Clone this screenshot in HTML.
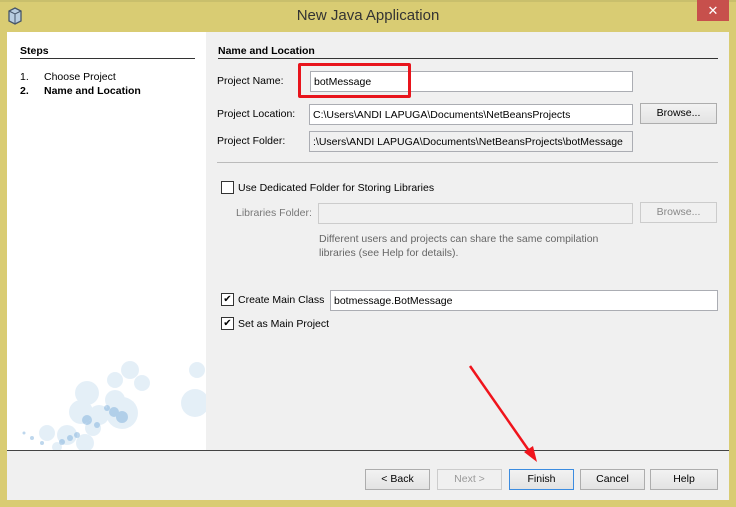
<!DOCTYPE html><html><head><style>
*{margin:0;padding:0;box-sizing:border-box}
body{width:736px;height:507px;background:#d9cc73;position:relative;overflow:hidden;font-family:"Liberation Sans",sans-serif;font-size:10.5px;color:#000}
.a{position:absolute;white-space:nowrap}
.in{position:absolute;background:#fff;border:1px solid #abadb3;height:21px;padding:4px 3px;white-space:nowrap;overflow:hidden}
.btn{position:absolute;border:1px solid #adadad;background:linear-gradient(#f2f2f2,#e3e3e3);height:21px;text-align:center;line-height:19px}
.cb{position:absolute;width:13px;height:13px;border:1px solid #333;background:#fff;font-size:10px;line-height:11px;text-align:center}
</style></head><body>
<div class="a" style="left:0;top:0;width:736px;height:2px;background:#c9bf6c"></div>
<svg class="a" style="left:8px;top:7px" width="14" height="18" viewBox="0 0 14 18"><path d="M7 1L13 4V14L7 17L1 14V4Z" fill="#b8cde0" stroke="#46566a" stroke-width="1.3"/><path d="M1 4L7 7L13 4M7 7V17" fill="none" stroke="#46566a" stroke-width="1"/></svg>
<div class="a" style="left:0;width:736px;top:7px;text-align:center;font-size:15px;color:#333">New Java Application</div>
<div class="a" style="left:697px;top:0;width:32px;height:21px;background:#c7504c;color:#fff;text-align:center;font-size:13px;line-height:21px">✕</div>
<div class="a" style="left:7px;top:32px;width:722px;height:468px;background:#f0f0f0"></div>
<div class="a" style="left:7px;top:32px;width:199px;height:418px;background:#fff"></div>
<svg class="a" style="left:7px;top:360px" width="199" height="90">
<g fill="#a9cbe8" opacity="0.3">
<circle cx="123" cy="10" r="9"/><circle cx="108" cy="20" r="8"/><circle cx="135" cy="23" r="8"/><circle cx="108" cy="40" r="10"/><circle cx="80" cy="33" r="12"/><circle cx="115" cy="53" r="16"/><circle cx="188" cy="43" r="14"/><circle cx="190" cy="10" r="8"/><circle cx="74" cy="52" r="12"/><circle cx="86" cy="68" r="8"/><circle cx="60" cy="75" r="10"/><circle cx="78" cy="83" r="9"/><circle cx="40" cy="73" r="8"/><circle cx="50" cy="87" r="5"/><circle cx="92" cy="55" r="10"/></g>
<g fill="#7fb0dc" opacity="0.5"><circle cx="107" cy="52" r="5"/><circle cx="115" cy="57" r="6"/><circle cx="80" cy="60" r="5"/><circle cx="90" cy="65" r="3"/><circle cx="63" cy="78" r="3"/><circle cx="35" cy="83" r="2"/><circle cx="25" cy="78" r="2"/><circle cx="17" cy="73" r="1.5"/><circle cx="55" cy="82" r="3"/><circle cx="100" cy="48" r="3"/><circle cx="70" cy="75" r="3"/></g></svg>
<div class="a" style="left:7px;top:450px;width:722px;height:1px;background:#444"></div>
<div class="a" style="left:20px;top:45px;font-weight:bold">Steps</div>
<div class="a" style="left:20px;top:58px;width:175px;height:1px;background:#333"></div>
<div class="a" style="left:20px;top:71px">1.</div><div class="a" style="left:44px;top:71px">Choose Project</div>
<div class="a" style="left:20px;top:85px;font-weight:bold">2.</div><div class="a" style="left:44px;top:85px;font-weight:bold">Name and Location</div>
<div class="a" style="left:218px;top:45px;font-weight:bold">Name and Location</div>
<div class="a" style="left:218px;top:58px;width:500px;height:1px;background:#333"></div>
<div class="a" style="left:217px;top:75px">Project Name:</div>
<div class="in" style="left:310px;top:71px;width:323px">botMessage</div>
<div class="a" style="left:298px;top:63px;width:113px;height:35px;border:3px solid #e8141c;border-radius:2px"></div>
<div class="a" style="left:217px;top:108px">Project Location:</div>
<div class="in" style="left:309px;top:104px;width:324px">C:\Users\ANDI LAPUGA\Documents\NetBeansProjects</div>
<div class="btn" style="left:640px;top:103px;width:77px">Browse...</div>
<div class="a" style="left:217px;top:135px">Project Folder:</div>
<div class="in" style="left:309px;top:131px;width:324px;background:#f0f0f0">:\Users\ANDI LAPUGA\Documents\NetBeansProjects\botMessage</div>
<div class="a" style="left:217px;top:162px;width:501px;height:1px;background:#bbb"></div>
<div class="cb" style="left:221px;top:181px"></div><div class="a" style="left:238px;top:182px">Use Dedicated Folder for Storing Libraries</div>
<div class="a" style="left:236px;top:207px;color:#777">Libraries Folder:</div>
<div class="in" style="left:318px;top:203px;width:315px;background:#f0f0f0;border-color:#ccc"></div>
<div class="btn" style="left:640px;top:202px;width:77px;color:#888;border-color:#ccc;background:#f0f0f0">Browse...</div>
<div class="a" style="left:319px;top:232px;color:#666;line-height:14px">Different users and projects can share the same compilation<br>libraries (see Help for details).</div>
<div class="cb" style="left:221px;top:293px">✔</div><div class="a" style="left:238px;top:294px">Create Main Class</div>
<div class="in" style="left:330px;top:290px;width:388px">botmessage.BotMessage</div>
<div class="cb" style="left:221px;top:317px">✔</div><div class="a" style="left:238px;top:318px">Set as Main Project</div>
<div class="btn" style="left:365px;top:469px;width:65px">&lt; Back</div>
<div class="btn" style="left:437px;top:469px;width:65px;color:#999;border-color:#ccc;background:#f0f0f0">Next &gt;</div>
<div class="btn" style="left:509px;top:469px;width:65px;border-color:#3c8ce0">Finish</div>
<div class="btn" style="left:580px;top:469px;width:65px">Cancel</div>
<div class="btn" style="left:650px;top:469px;width:68px">Help</div>
<svg class="a" style="left:0;top:0" width="736" height="507"><line x1="470" y1="366" x2="532" y2="455" stroke="#f0141c" stroke-width="2.5"/><path d="M537 462L524 452L533 446Z" fill="#f0141c"/></svg>
<div class="a" style="left:0;top:500px;width:736px;height:7px;background:#d9cc73"></div>
</body></html>
